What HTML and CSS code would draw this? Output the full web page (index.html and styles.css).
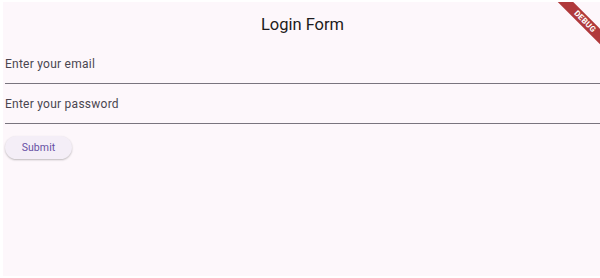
FILE: index.html
```html
<!DOCTYPE html>
<html>
<head>
<meta charset="utf-8">
<link rel="stylesheet" href="styles.css">
</head>
<body>
<div class="app">
  <header class="appbar">
    <h1 class="title">Login Form</h1>
  </header>
  <main class="form">
    <div class="field"><span class="label">Enter your email</span></div>
    <div class="field"><span class="label">Enter your password</span></div>
    <div class="actions">
      <button class="submit">Submit</button>
    </div>
  </main>
  <div class="banner">DEBUG</div>
</div>
</body>
</html>
```
FILE: styles.css
```css
html, body {
  margin: 0;
  padding: 0;
  background: #ffffff;
}
body {
  font-family: Roboto, "Liberation Sans", sans-serif;
  overflow: hidden;
}
.app {
  position: relative;
  margin: 2px 0 2px 3px;
  height: 274px;
  background: #fdf7fb;
  overflow: hidden;
}
.appbar {
  height: 42px;
  display: flex;
  align-items: center;
  justify-content: center;
}
.title {
  margin: 0;
  padding: 2px 0 0 2px;
  font-size: 16.5px;
  font-weight: 400;
  color: #1d1b20;
}
.form {
  padding: 0 0 0 2px;
  display: flex;
  flex-direction: column;
}
.field {
  height: 39px;
  border-bottom: 1px solid #79747e;
  display: flex;
  align-items: center;
}
.label {
  font-size: 12px;
  letter-spacing: 0.25px;
  color: #4a4650;
  padding-top: 1px;
}
.actions {
  padding-top: 12px;
}
.submit {
  font-family: Roboto, "Liberation Sans", sans-serif;
  height: 23px;
  width: 67px;
  border: none;
  border-radius: 12px;
  background: #f4eef7;
  color: #6750a4;
  font-size: 10.5px;
  font-weight: 400;
  letter-spacing: 0.1px;
  box-shadow: 0 1px 2px rgba(0, 0, 0, 0.25);
  padding: 0;
}
.banner {
  position: absolute;
  top: 14px;
  right: -25px;
  width: 80px;
  height: 11px;
  line-height: 11px;
  background: #b0393b;
  color: #ffffff;
  font-size: 8px;
  font-weight: 700;
  letter-spacing: 0.3px;
  text-align: center;
  transform: rotate(45deg);
}
```
